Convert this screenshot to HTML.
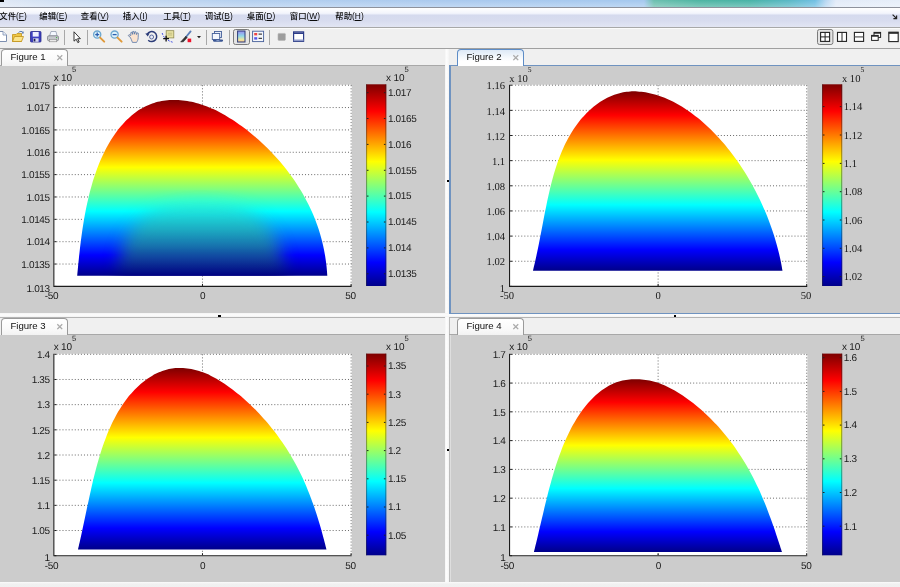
<!DOCTYPE html><html><head><meta charset="utf-8"><title>Figures</title><style>
html,body{margin:0;padding:0;background:#f0f0f0;}
#root{opacity:0.999;position:relative;width:900px;height:587px;overflow:hidden;background:#f0f0f0;font-family:"Liberation Sans","Noto Sans CJK SC",sans-serif;}
#root div,#root span{position:absolute;box-sizing:border-box;}
#title{left:0;top:0;width:900px;height:7px;background:linear-gradient(180deg,rgba(255,255,255,0) 0,rgba(255,255,255,0.28) 100%),linear-gradient(90deg,#dfe8f5 0px,#cfdff3 60px,#b3cfef 250px,#a9c9ee 450px,#a4c8ee 644px,#6bbfae 654px,#4db5a2 700px,#48b3a6 750px,#5ab8c6 790px,#6fbfe2 815px,#b8d8f2 826px,#e2ebf8 836px,#e6eef9 900px);}
#titleline{left:0;top:7px;width:900px;height:1px;background:#8e929c;}
#blk{left:0;top:0;width:4px;height:2px;background:#000;}
#menu{left:0;top:8px;width:900px;height:19px;background:linear-gradient(180deg,#ffffff 0px,#f3f5fc 5px,#eceffa 6px,#d5daee 7px,#d8dcef 13px,#e2e5f3 19px);}
#menu span{top:2.4px;margin-left:-0.7px;font-weight:500;font-size:8.4px;line-height:12px;color:#0a0a0a;white-space:nowrap;}
#menu u{text-decoration:underline;}
#tb{left:0;top:27px;width:900px;height:22px;background:#f0f0f0;border-top:1px solid #a8a8a8;border-bottom:1px solid #a0a0a0;box-shadow:inset 0 1px 0 #fbfbfb;}
.sep{top:30px;width:1px;height:15px;background:#a8a8a8;}
.tabstrip{height:18px;background:#f0f0f0;}
.tab{height:17px;background:linear-gradient(180deg,#fff,#fafafa 60%,#f2f2f2);border:1px solid #9a9a9a;border-bottom:none;border-radius:4px 4px 0 0;}
.tab span{left:8.4px;top:1px;font-size:9.6px;line-height:12px;color:#111;white-space:nowrap;}
.tab i{position:absolute;right:3px;top:2px;font-style:normal;font-size:9px;line-height:12px;color:#aaa;font-weight:bold;}
.pane{background:#cccccc;}
</style></head><body>
<div id="root">
<div id="title"></div><div id="blk"></div><div id="titleline"></div>
<div id="menu"><span style="left:0px">文件(<u>F</u>)</span><span style="left:40px">编辑(<u>E</u>)</span><span style="left:81.5px">查看(<u>V</u>)</span><span style="left:123.5px">插入(<u>I</u>)</span><span style="left:164px">工具(<u>T</u>)</span><span style="left:205.5px">调试(<u>B</u>)</span><span style="left:247.5px">桌面(<u>D</u>)</span><span style="left:290.5px">窗口(<u>W</u>)</span><span style="left:336px">帮助(<u>H</u>)</span></div>
<div id="tb"></div>
<div class="sep" style="left:64px"></div>
<div class="sep" style="left:87px"></div>
<div class="sep" style="left:206px"></div>
<div class="sep" style="left:229px"></div>
<div class="sep" style="left:269px"></div>
<div style="left:0;top:49px;width:900px;height:538px;background:#f0f0f0"></div>
<div style="left:445px;top:49px;width:4px;height:538px;background:linear-gradient(90deg,#f4f4f4,#fdfdfd 40%,#f4f4f4)"></div>
<div style="left:0;top:313px;width:900px;height:4px;background:linear-gradient(180deg,#f4f4f4,#fdfdfd 50%,#f2f2f2)"></div>
<div style="left:0;top:582px;width:900px;height:5px;background:linear-gradient(180deg,#fbfbfb,#f1f1f1 2px,#f0f0f0)"></div>
<div class="pane" style="left:0;top:66px;width:445px;height:247px"></div>
<div style="left:449px;top:65px;width:452px;height:249.2px;background:#6f93c0"></div>
<div class="pane" style="left:450.6px;top:66px;width:450px;height:247px"></div>
<div class="pane" style="left:0;top:335px;width:445px;height:247px"></div>
<div style="left:449px;top:318px;width:1px;height:264px;background:#bdbdbd"></div>
<div style="left:450px;top:335px;width:1px;height:247px;background:#dedede"></div>
<div class="pane" style="left:451px;top:335px;width:449px;height:247px"></div>
<div style="left:0;top:317px;width:445px;height:1px;background:#b4b4b4"></div>
<div style="left:449px;top:317px;width:451px;height:1px;background:#b4b4b4"></div>
<div style="left:446.7px;top:180px;width:2.3px;height:2.1px;background:#000"></div>
<div style="left:446.7px;top:449px;width:2.3px;height:2.1px;background:#000"></div>
<div style="left:218.3px;top:315px;width:2.5px;height:2px;background:#000"></div>
<div style="left:674px;top:315px;width:2.3px;height:2px;background:#000"></div>
<div class="tab" style="left:1px;top:49px;width:67px;"><span>Figure 1</span><i>✕</i></div>
<div class="tab" style="left:457px;top:49px;width:67px;border-color:#5d8cc6;background:linear-gradient(180deg,#dde9f6,#f4f8fc 45%,#ffffff 70%);"><span>Figure 2</span><i>✕</i></div>
<div class="tab" style="left:1px;top:318px;width:67px;"><span>Figure 3</span><i>✕</i></div>
<div class="tab" style="left:457px;top:318px;width:67px;"><span>Figure 4</span><i>✕</i></div>
<div style="left:68px;top:65px;width:377px;height:1px;background:#a8a8a8"></div>
<div style="left:0;top:65px;width:2px;height:1px;background:#a8a8a8"></div>
<div style="left:68px;top:334px;width:377px;height:1px;background:#a8a8a8"></div>
<div style="left:524px;top:334px;width:376px;height:1px;background:#a8a8a8"></div>
<div style="left:449px;top:334px;width:8px;height:1px;background:#a8a8a8"></div>
<svg width="900" height="587" viewBox="0 0 900 587" style="position:absolute;left:0;top:0">
<rect x="53.35" y="84.70" width="298.45" height="202.20" fill="#fff"/>
<linearGradient id="jet1" gradientUnits="userSpaceOnUse" x1="0" y1="275.70" x2="0" y2="100.00"><stop offset="0.0000" stop-color="rgb(0,0,138)"/><stop offset="0.1170" stop-color="rgb(0,0,255)"/><stop offset="0.3670" stop-color="rgb(0,255,255)"/><stop offset="0.6170" stop-color="rgb(255,255,0)"/><stop offset="0.8670" stop-color="rgb(255,0,0)"/><stop offset="1.0000" stop-color="rgb(125,0,0)"/></linearGradient>
<linearGradient id="jet1c" gradientUnits="userSpaceOnUse" x1="0" y1="286.00" x2="0" y2="84.30"><stop offset="0.0000" stop-color="rgb(0,0,138)"/><stop offset="0.1170" stop-color="rgb(0,0,255)"/><stop offset="0.3670" stop-color="rgb(0,255,255)"/><stop offset="0.6170" stop-color="rgb(255,255,0)"/><stop offset="0.8670" stop-color="rgb(255,0,0)"/><stop offset="1.0000" stop-color="rgb(125,0,0)"/></linearGradient>
<path d="M56.35,264.04H351.60M56.35,241.69H351.60M56.35,219.33H351.60M56.35,196.98H351.60M56.35,174.62H351.60M56.35,152.27H351.60M56.35,129.91H351.60M56.35,107.56H351.60M56.35,85.20H351.60M202.48,85.20V286.40M351.10,85.20V286.40" stroke="#6a6a6a" stroke-width="1" stroke-dasharray="1 2.07" fill="none"/>
<path d="M77.20,275.70C77.34,274.22 77.75,269.73 78.03,266.81C78.31,263.88 78.60,260.99 78.89,258.14C79.19,255.29 79.50,252.48 79.81,249.71C80.13,246.94 80.46,244.20 80.80,241.51C81.14,238.81 81.49,236.15 81.86,233.54C82.23,230.92 82.61,228.34 83.01,225.80C83.41,223.26 83.82,220.75 84.25,218.29C84.68,215.82 85.13,213.40 85.59,211.01C86.05,208.62 86.53,206.27 87.03,203.96C87.53,201.65 88.05,199.38 88.58,197.15C89.11,194.92 89.67,192.72 90.24,190.56C90.81,188.41 91.40,186.29 92.00,184.21C92.61,182.13 93.23,180.09 93.88,178.09C94.52,176.09 95.18,174.12 95.86,172.20C96.54,170.27 97.24,168.39 97.95,166.54C98.67,164.69 99.40,162.88 100.15,161.11C100.89,159.34 101.66,157.60 102.44,155.91C103.22,154.22 104.02,152.56 104.84,150.94C105.65,149.33 106.48,147.75 107.33,146.21C108.17,144.67 109.03,143.16 109.91,141.70C110.79,140.24 111.68,138.81 112.58,137.43C113.48,136.04 114.40,134.69 115.33,133.38C116.27,132.07 117.21,130.80 118.17,129.57C119.13,128.34 120.10,127.15 121.08,125.99C122.06,124.84 123.06,123.72 124.07,122.64C125.07,121.56 126.09,120.52 127.13,119.52C128.16,118.52 129.20,117.56 130.25,116.63C131.31,115.71 132.37,114.82 133.45,113.98C134.52,113.13 135.61,112.32 136.71,111.55C137.81,110.78 138.92,110.05 140.04,109.36C141.16,108.66 142.29,108.01 143.43,107.39C144.58,106.78 145.73,106.20 146.90,105.66C148.07,105.12 149.25,104.62 150.44,104.16C151.64,103.70 152.84,103.27 154.06,102.89C155.28,102.50 156.52,102.16 157.77,101.85C159.02,101.54 160.28,101.27 161.56,101.04C162.85,100.81 164.14,100.62 165.46,100.46C166.78,100.31 168.11,100.19 169.47,100.12C170.82,100.04 172.14,100.00 173.60,100.00C175.06,100.00 176.71,100.04 178.23,100.12C179.76,100.19 181.27,100.31 182.77,100.46C184.27,100.62 185.75,100.81 187.23,101.04C188.72,101.27 190.18,101.54 191.65,101.85C193.12,102.16 194.59,102.50 196.05,102.89C197.52,103.27 198.98,103.70 200.45,104.16C201.92,104.62 203.39,105.12 204.86,105.66C206.33,106.20 207.81,106.78 209.30,107.39C210.78,108.01 212.27,108.66 213.77,109.36C215.26,110.05 216.77,110.78 218.28,111.55C219.79,112.32 221.31,113.13 222.84,113.98C224.36,114.82 225.90,115.71 227.44,116.63C228.99,117.56 230.54,118.52 232.10,119.52C233.65,120.52 235.22,121.56 236.79,122.64C238.36,123.72 239.94,124.84 241.53,125.99C243.11,127.15 244.70,128.34 246.29,129.57C247.88,130.80 249.48,132.07 251.07,133.38C252.67,134.69 254.27,136.04 255.87,137.43C257.47,138.81 259.07,140.24 260.66,141.70C262.25,143.16 263.85,144.67 265.43,146.21C267.02,147.75 268.60,149.33 270.17,150.94C271.74,152.56 273.31,154.22 274.86,155.91C276.41,157.60 277.96,159.34 279.48,161.11C281.01,162.88 282.52,164.69 284.01,166.54C285.51,168.39 286.99,170.27 288.44,172.20C289.89,174.12 291.33,176.09 292.74,178.09C294.15,180.09 295.53,182.13 296.89,184.21C298.24,186.29 299.57,188.41 300.87,190.56C302.16,192.72 303.43,194.92 304.66,197.15C305.88,199.38 307.08,201.65 308.23,203.96C309.38,206.27 310.50,208.62 311.57,211.01C312.64,213.40 313.67,215.82 314.65,218.29C315.63,220.75 316.57,223.26 317.45,225.80C318.34,228.34 319.18,230.92 319.96,233.54C320.74,236.15 321.47,238.81 322.14,241.51C322.81,244.20 323.43,246.94 323.99,249.71C324.54,252.48 325.04,255.29 325.47,258.14C325.91,260.99 326.28,263.88 326.58,266.81C326.89,269.73 327.18,274.22 327.30,275.70Z" fill="url(#jet1)"/>
<clipPath id="c1"><path d="M77.20,275.70C77.34,274.22 77.75,269.73 78.03,266.81C78.31,263.88 78.60,260.99 78.89,258.14C79.19,255.29 79.50,252.48 79.81,249.71C80.13,246.94 80.46,244.20 80.80,241.51C81.14,238.81 81.49,236.15 81.86,233.54C82.23,230.92 82.61,228.34 83.01,225.80C83.41,223.26 83.82,220.75 84.25,218.29C84.68,215.82 85.13,213.40 85.59,211.01C86.05,208.62 86.53,206.27 87.03,203.96C87.53,201.65 88.05,199.38 88.58,197.15C89.11,194.92 89.67,192.72 90.24,190.56C90.81,188.41 91.40,186.29 92.00,184.21C92.61,182.13 93.23,180.09 93.88,178.09C94.52,176.09 95.18,174.12 95.86,172.20C96.54,170.27 97.24,168.39 97.95,166.54C98.67,164.69 99.40,162.88 100.15,161.11C100.89,159.34 101.66,157.60 102.44,155.91C103.22,154.22 104.02,152.56 104.84,150.94C105.65,149.33 106.48,147.75 107.33,146.21C108.17,144.67 109.03,143.16 109.91,141.70C110.79,140.24 111.68,138.81 112.58,137.43C113.48,136.04 114.40,134.69 115.33,133.38C116.27,132.07 117.21,130.80 118.17,129.57C119.13,128.34 120.10,127.15 121.08,125.99C122.06,124.84 123.06,123.72 124.07,122.64C125.07,121.56 126.09,120.52 127.13,119.52C128.16,118.52 129.20,117.56 130.25,116.63C131.31,115.71 132.37,114.82 133.45,113.98C134.52,113.13 135.61,112.32 136.71,111.55C137.81,110.78 138.92,110.05 140.04,109.36C141.16,108.66 142.29,108.01 143.43,107.39C144.58,106.78 145.73,106.20 146.90,105.66C148.07,105.12 149.25,104.62 150.44,104.16C151.64,103.70 152.84,103.27 154.06,102.89C155.28,102.50 156.52,102.16 157.77,101.85C159.02,101.54 160.28,101.27 161.56,101.04C162.85,100.81 164.14,100.62 165.46,100.46C166.78,100.31 168.11,100.19 169.47,100.12C170.82,100.04 172.14,100.00 173.60,100.00C175.06,100.00 176.71,100.04 178.23,100.12C179.76,100.19 181.27,100.31 182.77,100.46C184.27,100.62 185.75,100.81 187.23,101.04C188.72,101.27 190.18,101.54 191.65,101.85C193.12,102.16 194.59,102.50 196.05,102.89C197.52,103.27 198.98,103.70 200.45,104.16C201.92,104.62 203.39,105.12 204.86,105.66C206.33,106.20 207.81,106.78 209.30,107.39C210.78,108.01 212.27,108.66 213.77,109.36C215.26,110.05 216.77,110.78 218.28,111.55C219.79,112.32 221.31,113.13 222.84,113.98C224.36,114.82 225.90,115.71 227.44,116.63C228.99,117.56 230.54,118.52 232.10,119.52C233.65,120.52 235.22,121.56 236.79,122.64C238.36,123.72 239.94,124.84 241.53,125.99C243.11,127.15 244.70,128.34 246.29,129.57C247.88,130.80 249.48,132.07 251.07,133.38C252.67,134.69 254.27,136.04 255.87,137.43C257.47,138.81 259.07,140.24 260.66,141.70C262.25,143.16 263.85,144.67 265.43,146.21C267.02,147.75 268.60,149.33 270.17,150.94C271.74,152.56 273.31,154.22 274.86,155.91C276.41,157.60 277.96,159.34 279.48,161.11C281.01,162.88 282.52,164.69 284.01,166.54C285.51,168.39 286.99,170.27 288.44,172.20C289.89,174.12 291.33,176.09 292.74,178.09C294.15,180.09 295.53,182.13 296.89,184.21C298.24,186.29 299.57,188.41 300.87,190.56C302.16,192.72 303.43,194.92 304.66,197.15C305.88,199.38 307.08,201.65 308.23,203.96C309.38,206.27 310.50,208.62 311.57,211.01C312.64,213.40 313.67,215.82 314.65,218.29C315.63,220.75 316.57,223.26 317.45,225.80C318.34,228.34 319.18,230.92 319.96,233.54C320.74,236.15 321.47,238.81 322.14,241.51C322.81,244.20 323.43,246.94 323.99,249.71C324.54,252.48 325.04,255.29 325.47,258.14C325.91,260.99 326.28,263.88 326.58,266.81C326.89,269.73 327.18,274.22 327.30,275.70Z"/></clipPath><filter id="bl" x="-30%" y="-30%" width="160%" height="160%"><feGaussianBlur stdDeviation="8"/></filter><linearGradient id="shg" gradientUnits="userSpaceOnUse" x1="0" y1="200" x2="0" y2="276"><stop offset="0" stop-color="rgb(50,250,210)"/><stop offset="0.2" stop-color="rgb(30,215,215)"/><stop offset="0.4" stop-color="rgb(30,170,190)"/><stop offset="0.6" stop-color="rgb(25,120,170)"/><stop offset="0.8" stop-color="rgb(15,60,150)"/><stop offset="1" stop-color="rgb(0,0,128)"/></linearGradient><mask id="shm" maskUnits="userSpaceOnUse" x="60" y="150" width="290" height="150"><path d="M114,300 C116,228 142,200 201,200 C260,200 286,228 288,300 Z" fill="#fff" filter="url(#bl)"/></mask><g clip-path="url(#c1)"><rect x="70" y="190" width="270" height="90" fill="url(#shg)" mask="url(#shm)" opacity="0.95"/></g>
<path d="M53.85,84.70V286.40H351.70" stroke="#1c1c1c" stroke-width="1.1" fill="none"/>
<path d="M54.35,286.40h2M54.35,264.04h2M54.35,241.69h2M54.35,219.33h2M54.35,196.98h2M54.35,174.62h2M54.35,152.27h2M54.35,129.91h2M54.35,107.56h2M54.35,85.20h2M202.48,285.90v-2M351.10,285.90v-2" stroke="#1c1c1c" stroke-width="1" fill="none"/>
<g style="font-family:'Liberation Sans', sans-serif;font-size:10px;letter-spacing:-0.35px;text-rendering:geometricPrecision" fill="#1a1a1a">
<text x="49.80" y="291.80" text-anchor="end">1.013</text>
<text x="49.80" y="267.84" text-anchor="end">1.0135</text>
<text x="49.80" y="245.49" text-anchor="end">1.014</text>
<text x="49.80" y="223.13" text-anchor="end">1.0145</text>
<text x="49.80" y="200.78" text-anchor="end">1.015</text>
<text x="49.80" y="178.42" text-anchor="end">1.0155</text>
<text x="49.80" y="156.07" text-anchor="end">1.016</text>
<text x="49.80" y="133.71" text-anchor="end">1.0165</text>
<text x="49.80" y="111.36" text-anchor="end">1.017</text>
<text x="49.80" y="89.00" text-anchor="end">1.0175</text>
<text x="51.52" y="299.30" text-anchor="middle">-50</text>
<text x="202.65" y="299.30" text-anchor="middle">0</text>
<text x="350.58" y="299.30" text-anchor="middle">50</text>
<text x="53.65" y="80.60" style="letter-spacing:-0.15px">x 10</text>
<text x="72.05" y="71.60" style="font-size:7.6px">5</text>
<rect x="366.10" y="84.30" width="20.20" height="201.70" fill="url(#jet1c)"/>
<path d="M366.60,84.30V286.00M385.80,84.30V286.00" stroke="#222" stroke-width="1" fill="none" opacity="0.45"/>
<text x="387.90" y="277.10">1.0135</text>
<text x="387.90" y="251.20">1.014</text>
<text x="387.90" y="225.30">1.0145</text>
<text x="387.90" y="199.40">1.015</text>
<text x="387.90" y="173.60">1.0155</text>
<text x="387.90" y="147.70">1.016</text>
<text x="387.90" y="121.80">1.0165</text>
<text x="387.90" y="96.00">1.017</text>
<path d="M366.90,273.80h1.6M385.50,273.80h-1.6M366.90,247.90h1.6M385.50,247.90h-1.6M366.90,222.00h1.6M385.50,222.00h-1.6M366.90,196.10h1.6M385.50,196.10h-1.6M366.90,170.30h1.6M385.50,170.30h-1.6M366.90,144.40h1.6M385.50,144.40h-1.6M366.90,118.50h1.6M385.50,118.50h-1.6M366.90,92.70h1.6M385.50,92.70h-1.6" stroke="#222" stroke-width="1" fill="none"/>
<text x="386.00" y="81.00" style="letter-spacing:-0.15px">x 10</text>
<text x="404.50" y="71.70" style="font-size:7.6px">5</text>
</g>
<rect x="509.05" y="84.70" width="298.35" height="202.20" fill="#fff"/>
<linearGradient id="jet2" gradientUnits="userSpaceOnUse" x1="0" y1="270.70" x2="0" y2="91.30"><stop offset="0.0000" stop-color="rgb(0,0,138)"/><stop offset="0.1170" stop-color="rgb(0,0,255)"/><stop offset="0.3670" stop-color="rgb(0,255,255)"/><stop offset="0.6170" stop-color="rgb(255,255,0)"/><stop offset="0.8670" stop-color="rgb(255,0,0)"/><stop offset="1.0000" stop-color="rgb(125,0,0)"/></linearGradient>
<linearGradient id="jet2c" gradientUnits="userSpaceOnUse" x1="0" y1="286.00" x2="0" y2="84.30"><stop offset="0.0000" stop-color="rgb(0,0,138)"/><stop offset="0.1170" stop-color="rgb(0,0,255)"/><stop offset="0.3670" stop-color="rgb(0,255,255)"/><stop offset="0.6170" stop-color="rgb(255,255,0)"/><stop offset="0.8670" stop-color="rgb(255,0,0)"/><stop offset="1.0000" stop-color="rgb(125,0,0)"/></linearGradient>
<path d="M512.05,261.25H807.20M512.05,236.10H807.20M512.05,210.95H807.20M512.05,185.80H807.20M512.05,160.65H807.20M512.05,135.50H807.20M512.05,110.35H807.20M512.05,85.20H807.20M658.12,85.20V286.40M806.70,85.20V286.40" stroke="#6a6a6a" stroke-width="1" stroke-dasharray="1 2.07" fill="none"/>
<path d="M533.00,270.70C533.35,269.19 534.45,264.61 535.12,261.62C535.79,258.63 536.42,255.68 537.03,252.77C537.65,249.86 538.23,246.99 538.79,244.16C539.36,241.33 539.90,238.54 540.43,235.79C540.97,233.04 541.48,230.32 541.99,227.65C542.51,224.98 543.00,222.34 543.50,219.75C544.01,217.15 544.50,214.60 545.00,212.08C545.49,209.56 545.99,207.09 546.49,204.65C547.00,202.21 547.50,199.81 548.02,197.45C548.54,195.09 549.06,192.78 549.60,190.49C550.14,188.21 550.68,185.97 551.24,183.77C551.80,181.57 552.38,179.41 552.97,177.28C553.56,175.16 554.16,173.08 554.79,171.03C555.41,168.99 556.05,166.98 556.71,165.02C557.36,163.05 558.04,161.13 558.74,159.24C559.43,157.35 560.15,155.50 560.88,153.69C561.61,151.89 562.37,150.12 563.14,148.39C563.92,146.66 564.71,144.97 565.52,143.32C566.34,141.66 567.17,140.05 568.02,138.48C568.88,136.91 569.75,135.37 570.64,133.88C571.53,132.39 572.44,130.93 573.37,129.52C574.30,128.10 575.25,126.72 576.21,125.39C577.18,124.05 578.16,122.75 579.16,121.49C580.15,120.24 581.17,119.02 582.20,117.84C583.22,116.66 584.27,115.52 585.32,114.42C586.38,113.32 587.45,112.26 588.53,111.23C589.62,110.21 590.71,109.23 591.82,108.28C592.92,107.34 594.04,106.44 595.16,105.57C596.29,104.71 597.42,103.88 598.56,103.09C599.70,102.31 600.85,101.56 602.01,100.85C603.16,100.15 604.32,99.48 605.49,98.85C606.65,98.22 607.82,97.63 608.99,97.08C610.16,96.53 611.34,96.02 612.52,95.55C613.69,95.07 614.87,94.64 616.05,94.25C617.22,93.86 618.40,93.50 619.58,93.19C620.76,92.87 621.93,92.60 623.11,92.36C624.28,92.13 625.45,91.93 626.62,91.77C627.79,91.61 628.96,91.50 630.12,91.42C631.28,91.34 632.38,91.30 633.60,91.30C634.82,91.30 636.15,91.34 637.46,91.42C638.76,91.50 640.08,91.61 641.42,91.77C642.76,91.93 644.11,92.13 645.48,92.36C646.85,92.60 648.23,92.87 649.62,93.19C651.02,93.50 652.42,93.86 653.83,94.25C655.25,94.64 656.67,95.07 658.10,95.55C659.53,96.02 660.97,96.53 662.42,97.08C663.86,97.63 665.31,98.22 666.77,98.85C668.23,99.48 669.69,100.15 671.15,100.85C672.62,101.56 674.08,102.31 675.55,103.09C677.02,103.88 678.50,104.71 679.97,105.57C681.45,106.44 682.92,107.34 684.40,108.28C685.87,109.23 687.35,110.21 688.82,111.23C690.30,112.26 691.77,113.32 693.24,114.42C694.72,115.52 696.19,116.66 697.65,117.84C699.12,119.02 700.59,120.24 702.05,121.49C703.51,122.75 704.97,124.05 706.43,125.39C707.88,126.72 709.33,128.10 710.78,129.52C712.22,130.93 713.66,132.39 715.10,133.88C716.53,135.37 717.96,136.91 719.38,138.48C720.81,140.05 722.22,141.66 723.63,143.32C725.03,144.97 726.43,146.66 727.82,148.39C729.21,150.12 730.59,151.89 731.96,153.69C733.34,155.50 734.70,157.35 736.05,159.24C737.40,161.13 738.73,163.05 740.06,165.02C741.38,166.98 742.70,168.99 744.00,171.03C745.29,173.08 746.58,175.16 747.85,177.28C749.11,179.41 750.37,181.57 751.60,183.77C752.83,185.97 754.05,188.21 755.25,190.49C756.44,192.78 757.62,195.09 758.78,197.45C759.93,199.81 761.06,202.21 762.17,204.65C763.28,207.09 764.36,209.56 765.42,212.08C766.48,214.60 767.51,217.15 768.50,219.75C769.50,222.34 770.47,224.98 771.41,227.65C772.34,230.32 773.25,233.04 774.11,235.79C774.98,238.54 775.81,241.33 776.60,244.16C777.39,246.99 778.14,249.86 778.84,252.77C779.54,255.68 780.20,258.63 780.81,261.62C781.42,264.61 782.21,269.19 782.49,270.70Z" fill="url(#jet2)"/>
<path d="M509.55,84.70V286.40H807.30" stroke="#1c1c1c" stroke-width="1.1" fill="none"/>
<path d="M510.05,286.40h2M510.05,261.25h2M510.05,236.10h2M510.05,210.95h2M510.05,185.80h2M510.05,160.65h2M510.05,135.50h2M510.05,110.35h2M510.05,85.20h2M658.12,285.90v-2M806.70,285.90v-2" stroke="#1c1c1c" stroke-width="1" fill="none"/>
<g style="font-family:'Liberation Serif', serif;font-size:10.6px;letter-spacing:0px;text-rendering:geometricPrecision" fill="#1a1a1a">
<text x="505.15" y="292.20" text-anchor="end">1</text>
<text x="505.15" y="265.45" text-anchor="end">1.02</text>
<text x="505.15" y="240.30" text-anchor="end">1.04</text>
<text x="505.15" y="215.15" text-anchor="end">1.06</text>
<text x="505.15" y="190.00" text-anchor="end">1.08</text>
<text x="505.15" y="164.85" text-anchor="end">1.1</text>
<text x="505.15" y="139.70" text-anchor="end">1.12</text>
<text x="505.15" y="114.55" text-anchor="end">1.14</text>
<text x="505.15" y="89.40" text-anchor="end">1.16</text>
<text x="507.05" y="299.30" text-anchor="middle">-50</text>
<text x="658.12" y="299.30" text-anchor="middle">0</text>
<text x="806.00" y="299.30" text-anchor="middle">50</text>
<text x="509.35" y="81.70" style="letter-spacing:0px">x 10</text>
<text x="527.75" y="71.60" style="font-size:7.6px">5</text>
<rect x="822.10" y="84.30" width="20.10" height="201.70" fill="url(#jet2c)"/>
<path d="M822.60,84.30V286.00M841.70,84.30V286.00" stroke="#222" stroke-width="1" fill="none" opacity="0.45"/>
<text x="843.80" y="280.30">1.02</text>
<text x="843.80" y="252.00">1.04</text>
<text x="843.80" y="223.70">1.06</text>
<text x="843.80" y="195.40">1.08</text>
<text x="843.80" y="167.10">1.1</text>
<text x="843.80" y="138.70">1.12</text>
<text x="843.80" y="110.30">1.14</text>
<path d="M822.90,276.60h1.6M841.40,276.60h-1.6M822.90,248.30h1.6M841.40,248.30h-1.6M822.90,220.00h1.6M841.40,220.00h-1.6M822.90,191.70h1.6M841.40,191.70h-1.6M822.90,163.40h1.6M841.40,163.40h-1.6M822.90,135.00h1.6M841.40,135.00h-1.6M822.90,106.60h1.6M841.40,106.60h-1.6" stroke="#222" stroke-width="1" fill="none"/>
<text x="841.90" y="82.10" style="letter-spacing:0px">x 10</text>
<text x="860.40" y="71.70" style="font-size:7.6px">5</text>
</g>
<rect x="53.35" y="353.80" width="298.45" height="202.40" fill="#fff"/>
<linearGradient id="jet3" gradientUnits="userSpaceOnUse" x1="0" y1="549.40" x2="0" y2="368.00"><stop offset="0.0000" stop-color="rgb(0,0,138)"/><stop offset="0.1170" stop-color="rgb(0,0,255)"/><stop offset="0.3670" stop-color="rgb(0,255,255)"/><stop offset="0.6170" stop-color="rgb(255,255,0)"/><stop offset="0.8670" stop-color="rgb(255,0,0)"/><stop offset="1.0000" stop-color="rgb(125,0,0)"/></linearGradient>
<linearGradient id="jet3c" gradientUnits="userSpaceOnUse" x1="0" y1="555.30" x2="0" y2="353.60"><stop offset="0.0000" stop-color="rgb(0,0,138)"/><stop offset="0.1170" stop-color="rgb(0,0,255)"/><stop offset="0.3670" stop-color="rgb(0,255,255)"/><stop offset="0.6170" stop-color="rgb(255,255,0)"/><stop offset="0.8670" stop-color="rgb(255,0,0)"/><stop offset="1.0000" stop-color="rgb(125,0,0)"/></linearGradient>
<path d="M56.35,530.53H351.60M56.35,505.35H351.60M56.35,480.18H351.60M56.35,455.00H351.60M56.35,429.83H351.60M56.35,404.65H351.60M56.35,379.48H351.60M56.35,354.30H351.60M202.48,354.30V555.70M351.10,354.30V555.70" stroke="#6a6a6a" stroke-width="1" stroke-dasharray="1 2.07" fill="none"/>
<path d="M78.00,549.40C78.35,547.87 79.43,543.24 80.10,540.22C80.78,537.20 81.43,534.21 82.07,531.27C82.71,528.33 83.32,525.43 83.93,522.57C84.54,519.70 85.13,516.88 85.72,514.10C86.30,511.32 86.88,508.57 87.46,505.87C88.03,503.17 88.60,500.50 89.17,497.88C89.74,495.25 90.31,492.67 90.88,490.13C91.45,487.58 92.02,485.08 92.60,482.61C93.18,480.15 93.77,477.72 94.36,475.34C94.96,472.95 95.55,470.61 96.17,468.30C96.78,465.99 97.40,463.73 98.03,461.50C98.66,459.28 99.30,457.09 99.96,454.94C100.62,452.80 101.29,450.69 101.97,448.62C102.65,446.55 103.35,444.53 104.06,442.54C104.78,440.55 105.50,438.60 106.25,436.70C106.99,434.79 107.75,432.92 108.52,431.09C109.30,429.26 110.09,427.47 110.89,425.72C111.70,423.97 112.52,422.26 113.36,420.60C114.19,418.93 115.05,417.30 115.91,415.71C116.78,414.12 117.67,412.56 118.56,411.05C119.46,409.54 120.38,408.07 121.30,406.64C122.23,405.21 123.17,403.82 124.13,402.47C125.08,401.12 126.05,399.80 127.03,398.53C128.01,397.26 129.00,396.03 130.01,394.83C131.01,393.64 132.03,392.49 133.06,391.38C134.08,390.26 135.12,389.19 136.16,388.16C137.21,387.12 138.26,386.13 139.32,385.17C140.39,384.22 141.46,383.31 142.53,382.43C143.61,381.56 144.69,380.72 145.78,379.93C146.86,379.13 147.96,378.38 149.05,377.66C150.15,376.94 151.25,376.27 152.35,375.63C153.45,375.00 154.56,374.40 155.66,373.84C156.77,373.29 157.87,372.77 158.98,372.29C160.08,371.82 161.19,371.38 162.29,370.98C163.40,370.58 164.50,370.23 165.60,369.91C166.70,369.59 167.80,369.31 168.89,369.07C169.98,368.83 171.07,368.64 172.16,368.48C173.24,368.32 174.32,368.20 175.39,368.12C176.47,368.04 177.33,368.00 178.60,368.00C179.87,368.00 181.60,368.04 183.04,368.12C184.48,368.20 185.88,368.32 187.26,368.48C188.64,368.64 189.98,368.83 191.31,369.07C192.64,369.31 193.95,369.59 195.25,369.91C196.56,370.23 197.84,370.58 199.13,370.98C200.41,371.38 201.68,371.82 202.96,372.29C204.24,372.77 205.51,373.29 206.80,373.84C208.08,374.40 209.36,375.00 210.65,375.63C211.94,376.27 213.24,376.94 214.54,377.66C215.85,378.38 217.16,379.13 218.49,379.93C219.81,380.72 221.15,381.56 222.50,382.43C223.84,383.31 225.20,384.22 226.57,385.17C227.94,386.13 229.32,387.12 230.72,388.16C232.11,389.19 233.51,390.26 234.93,391.38C236.34,392.49 237.77,393.64 239.20,394.83C240.63,396.03 242.07,397.26 243.52,398.53C244.97,399.80 246.42,401.12 247.88,402.47C249.34,403.82 250.81,405.21 252.27,406.64C253.74,408.07 255.21,409.54 256.68,411.05C258.14,412.56 259.61,414.12 261.08,415.71C262.54,417.30 264.01,418.93 265.46,420.60C266.92,422.26 268.37,423.97 269.81,425.72C271.25,427.47 272.68,429.26 274.10,431.09C275.52,432.92 276.93,434.79 278.32,436.70C279.72,438.60 281.10,440.55 282.46,442.54C283.82,444.53 285.16,446.55 286.49,448.62C287.81,450.69 289.12,452.80 290.40,454.94C291.69,457.09 292.95,459.28 294.19,461.50C295.42,463.73 296.64,465.99 297.83,468.30C299.02,470.61 300.19,472.95 301.33,475.34C302.47,477.72 303.58,480.15 304.67,482.61C305.76,485.08 306.82,487.58 307.85,490.13C308.89,492.67 309.90,495.25 310.89,497.88C311.87,500.50 312.83,503.17 313.77,505.87C314.71,508.57 315.62,511.32 316.52,514.10C317.41,516.88 318.28,519.70 319.14,522.57C320.00,525.43 320.83,528.33 321.66,531.27C322.49,534.21 323.30,537.20 324.10,540.22C324.91,543.24 326.10,547.87 326.50,549.40Z" fill="url(#jet3)"/>
<path d="M53.85,353.80V555.70H351.70" stroke="#1c1c1c" stroke-width="1.1" fill="none"/>
<path d="M54.35,555.70h2M54.35,530.53h2M54.35,505.35h2M54.35,480.18h2M54.35,455.00h2M54.35,429.83h2M54.35,404.65h2M54.35,379.48h2M54.35,354.30h2M202.48,555.20v-2M351.10,555.20v-2" stroke="#1c1c1c" stroke-width="1" fill="none"/>
<g style="font-family:'Liberation Sans', sans-serif;font-size:10px;letter-spacing:-0.35px;text-rendering:geometricPrecision" fill="#1a1a1a">
<text x="49.80" y="561.10" text-anchor="end">1</text>
<text x="49.80" y="534.33" text-anchor="end">1.05</text>
<text x="49.80" y="509.15" text-anchor="end">1.1</text>
<text x="49.80" y="483.98" text-anchor="end">1.15</text>
<text x="49.80" y="458.80" text-anchor="end">1.2</text>
<text x="49.80" y="433.63" text-anchor="end">1.25</text>
<text x="49.80" y="408.45" text-anchor="end">1.3</text>
<text x="49.80" y="383.28" text-anchor="end">1.35</text>
<text x="49.80" y="358.10" text-anchor="end">1.4</text>
<text x="51.52" y="568.60" text-anchor="middle">-50</text>
<text x="202.65" y="568.60" text-anchor="middle">0</text>
<text x="350.58" y="568.60" text-anchor="middle">50</text>
<text x="53.65" y="349.70" style="letter-spacing:-0.15px">x 10</text>
<text x="72.05" y="340.70" style="font-size:7.6px">5</text>
<rect x="366.10" y="353.60" width="20.20" height="201.70" fill="url(#jet3c)"/>
<path d="M366.60,353.60V555.30M385.80,353.60V555.30" stroke="#222" stroke-width="1" fill="none" opacity="0.45"/>
<text x="387.90" y="538.50">1.05</text>
<text x="387.90" y="510.30">1.1</text>
<text x="387.90" y="482.10">1.15</text>
<text x="387.90" y="453.90">1.2</text>
<text x="387.90" y="425.70">1.25</text>
<text x="387.90" y="397.50">1.3</text>
<text x="387.90" y="369.30">1.35</text>
<path d="M366.90,535.20h1.6M385.50,535.20h-1.6M366.90,507.00h1.6M385.50,507.00h-1.6M366.90,478.80h1.6M385.50,478.80h-1.6M366.90,450.60h1.6M385.50,450.60h-1.6M366.90,422.40h1.6M385.50,422.40h-1.6M366.90,394.20h1.6M385.50,394.20h-1.6M366.90,366.00h1.6M385.50,366.00h-1.6" stroke="#222" stroke-width="1" fill="none"/>
<text x="386.00" y="350.30" style="letter-spacing:-0.15px">x 10</text>
<text x="404.50" y="341.00" style="font-size:7.6px">5</text>
</g>
<rect x="509.05" y="353.80" width="298.35" height="202.40" fill="#fff"/>
<linearGradient id="jet4" gradientUnits="userSpaceOnUse" x1="0" y1="551.90" x2="0" y2="379.20"><stop offset="0.0000" stop-color="rgb(0,0,138)"/><stop offset="0.1170" stop-color="rgb(0,0,255)"/><stop offset="0.3670" stop-color="rgb(0,255,255)"/><stop offset="0.6170" stop-color="rgb(255,255,0)"/><stop offset="0.8670" stop-color="rgb(255,0,0)"/><stop offset="1.0000" stop-color="rgb(125,0,0)"/></linearGradient>
<linearGradient id="jet4c" gradientUnits="userSpaceOnUse" x1="0" y1="555.30" x2="0" y2="353.60"><stop offset="0.0000" stop-color="rgb(0,0,138)"/><stop offset="0.1170" stop-color="rgb(0,0,255)"/><stop offset="0.3670" stop-color="rgb(0,255,255)"/><stop offset="0.6170" stop-color="rgb(255,255,0)"/><stop offset="0.8670" stop-color="rgb(255,0,0)"/><stop offset="1.0000" stop-color="rgb(125,0,0)"/></linearGradient>
<path d="M512.05,526.93H807.20M512.05,498.16H807.20M512.05,469.39H807.20M512.05,440.61H807.20M512.05,411.84H807.20M512.05,383.07H807.20M512.05,354.30H807.20M658.12,354.30V555.70M806.70,354.30V555.70" stroke="#6a6a6a" stroke-width="1" stroke-dasharray="1 2.07" fill="none"/>
<path d="M533.90,551.90C534.26,550.44 535.37,546.03 536.07,543.16C536.77,540.28 537.45,537.44 538.11,534.64C538.78,531.84 539.43,529.08 540.07,526.35C540.70,523.63 541.33,520.94 541.95,518.29C542.57,515.64 543.19,513.03 543.80,510.46C544.41,507.88 545.02,505.35 545.63,502.85C546.24,500.35 546.84,497.89 547.45,495.47C548.07,493.05 548.68,490.66 549.30,488.32C549.92,485.97 550.54,483.66 551.17,481.39C551.81,479.12 552.44,476.89 553.09,474.69C553.74,472.50 554.39,470.34 555.06,468.22C555.72,466.10 556.40,464.02 557.08,461.97C557.77,459.93 558.47,457.92 559.17,455.96C559.88,453.99 560.60,452.06 561.33,450.16C562.06,448.27 562.80,446.42 563.56,444.60C564.31,442.78 565.08,441.01 565.85,439.26C566.63,437.52 567.42,435.82 568.22,434.16C569.03,432.49 569.84,430.86 570.66,429.27C571.49,427.68 572.32,426.13 573.17,424.62C574.02,423.10 574.87,421.63 575.74,420.19C576.61,418.75 577.49,417.35 578.38,415.99C579.27,414.63 580.17,413.30 581.08,412.01C581.98,410.73 582.90,409.48 583.83,408.27C584.75,407.06 585.69,405.88 586.63,404.75C587.58,403.61 588.53,402.51 589.49,401.45C590.45,400.39 591.42,399.37 592.40,398.39C593.37,397.40 594.36,396.46 595.35,395.55C596.34,394.64 597.34,393.77 598.35,392.94C599.36,392.11 600.37,391.31 601.39,390.55C602.42,389.80 603.44,389.08 604.48,388.40C605.52,387.72 606.57,387.07 607.62,386.47C608.68,385.86 609.74,385.29 610.81,384.76C611.88,384.23 612.97,383.74 614.06,383.29C615.15,382.83 616.26,382.42 617.37,382.04C618.49,381.66 619.62,381.32 620.76,381.02C621.90,380.71 623.06,380.45 624.23,380.22C625.40,379.99 626.59,379.81 627.80,379.65C629.01,379.50 630.23,379.39 631.48,379.31C632.73,379.24 633.96,379.20 635.30,379.20C636.64,379.20 638.15,379.24 639.54,379.31C640.93,379.39 642.28,379.50 643.63,379.65C644.97,379.81 646.28,379.99 647.60,380.22C648.91,380.45 650.20,380.71 651.49,381.02C652.78,381.32 654.06,381.66 655.34,382.04C656.62,382.42 657.89,382.83 659.17,383.29C660.45,383.74 661.72,384.23 663.01,384.76C664.29,385.29 665.58,385.86 666.87,386.47C668.16,387.07 669.46,387.72 670.77,388.40C672.07,389.08 673.39,389.80 674.71,390.55C676.03,391.31 677.36,392.11 678.70,392.94C680.04,393.77 681.39,394.64 682.75,395.55C684.10,396.46 685.47,397.40 686.84,398.39C688.22,399.37 689.60,400.39 690.99,401.45C692.37,402.51 693.77,403.61 695.17,404.75C696.57,405.88 697.98,407.06 699.39,408.27C700.79,409.48 702.21,410.73 703.62,412.01C705.04,413.30 706.46,414.63 707.87,415.99C709.29,417.35 710.71,418.75 712.12,420.19C713.53,421.63 714.94,423.10 716.35,424.62C717.76,426.13 719.16,427.68 720.55,429.27C721.95,430.86 723.33,432.49 724.71,434.16C726.09,435.82 727.46,437.52 728.81,439.26C730.17,441.01 731.52,442.78 732.85,444.60C734.18,446.42 735.50,448.27 736.80,450.16C738.10,452.06 739.39,453.99 740.66,455.96C741.93,457.92 743.19,459.93 744.42,461.97C745.66,464.02 746.88,466.10 748.08,468.22C749.27,470.34 750.45,472.50 751.62,474.69C752.78,476.89 753.92,479.12 755.04,481.39C756.16,483.66 757.26,485.97 758.35,488.32C759.43,490.66 760.50,493.05 761.55,495.47C762.60,497.89 763.63,500.35 764.64,502.85C765.66,505.35 766.66,507.88 767.65,510.46C768.63,513.03 769.61,515.64 770.57,518.29C771.54,520.94 772.49,523.63 773.44,526.35C774.40,529.08 775.34,531.84 776.28,534.64C777.23,537.44 778.17,540.28 779.12,543.16C780.08,546.03 781.52,550.44 782.00,551.90Z" fill="url(#jet4)"/>
<path d="M509.55,353.80V555.70H807.30" stroke="#1c1c1c" stroke-width="1.1" fill="none"/>
<path d="M510.05,555.70h2M510.05,526.93h2M510.05,498.16h2M510.05,469.39h2M510.05,440.61h2M510.05,411.84h2M510.05,383.07h2M510.05,354.30h2M658.12,555.20v-2M806.70,555.20v-2" stroke="#1c1c1c" stroke-width="1" fill="none"/>
<g style="font-family:'Liberation Sans', sans-serif;font-size:10px;letter-spacing:-0.35px;text-rendering:geometricPrecision" fill="#1a1a1a">
<text x="505.50" y="561.10" text-anchor="end">1</text>
<text x="505.50" y="530.73" text-anchor="end">1.1</text>
<text x="505.50" y="501.96" text-anchor="end">1.2</text>
<text x="505.50" y="473.19" text-anchor="end">1.3</text>
<text x="505.50" y="444.41" text-anchor="end">1.4</text>
<text x="505.50" y="415.64" text-anchor="end">1.5</text>
<text x="505.50" y="386.87" text-anchor="end">1.6</text>
<text x="505.50" y="358.10" text-anchor="end">1.7</text>
<text x="507.23" y="568.60" text-anchor="middle">-50</text>
<text x="658.30" y="568.60" text-anchor="middle">0</text>
<text x="806.17" y="568.60" text-anchor="middle">50</text>
<text x="509.35" y="349.70" style="letter-spacing:-0.15px">x 10</text>
<text x="527.75" y="340.70" style="font-size:7.6px">5</text>
<rect x="822.10" y="353.60" width="20.10" height="201.70" fill="url(#jet4c)"/>
<path d="M822.60,353.60V555.30M841.70,353.60V555.30" stroke="#222" stroke-width="1" fill="none" opacity="0.45"/>
<text x="843.80" y="529.50">1.1</text>
<text x="843.80" y="495.80">1.2</text>
<text x="843.80" y="462.10">1.3</text>
<text x="843.80" y="428.40">1.4</text>
<text x="843.80" y="394.70">1.5</text>
<text x="843.80" y="361.00">1.6</text>
<path d="M822.90,526.20h1.6M841.40,526.20h-1.6M822.90,492.50h1.6M841.40,492.50h-1.6M822.90,458.80h1.6M841.40,458.80h-1.6M822.90,425.10h1.6M841.40,425.10h-1.6M822.90,391.40h1.6M841.40,391.40h-1.6M822.90,357.70h1.6M841.40,357.70h-1.6" stroke="#222" stroke-width="1" fill="none"/>
<text x="841.90" y="350.30" style="letter-spacing:-0.15px">x 10</text>
<text x="860.40" y="341.00" style="font-size:7.6px">5</text>
</g>
<path d="M-3,31.5H3L6.5,35V41.5H-3Z" fill="#fff" stroke="#7d8fb0" stroke-width="1"/><path d="M3,31.5V35H6.5" fill="#e8eefa" stroke="#7d8fb0" stroke-width="0.8"/>
<path d="M12.5,34.5H16L17,33.5H21.5V41.5H12.5Z" fill="#efc540" stroke="#c0921c" stroke-width="0.8"/><path d="M12.5,41.5L14.5,36.5H23.5L21.5,41.5Z" fill="#fbe48a" stroke="#c0921c" stroke-width="0.8"/><path d="M18.5,32.5C20,31 22,31 23,32.5" fill="none" stroke="#4a6ea8" stroke-width="0.9"/><path d="M23.6,31.2V33.4H21.4Z" fill="#4a6ea8"/>
<rect x="30.5" y="31.5" width="10.5" height="10.5" rx="0.8" fill="#3d3fc0" stroke="#2a2b8c" stroke-width="0.8"/><rect x="32.7" y="32" width="6" height="4.6" fill="#eef0ff"/><rect x="33" y="38.3" width="5.6" height="3.5" fill="#d8daf0"/><rect x="33.6" y="38.8" width="1.8" height="2.6" fill="#1c1c50"/>
<path d="M49.5,36L51,31.5H56L57,36Z" fill="#f4f8ff" stroke="#8a93a8" stroke-width="0.7"/><rect x="47.5" y="35.8" width="11" height="5" rx="1.4" fill="#c4c7cc" stroke="#7d8087" stroke-width="0.8"/><rect x="49.3" y="39.4" width="7.4" height="2.4" fill="#e9e9e9" stroke="#8a8a8a" stroke-width="0.6"/><circle cx="56.6" cy="37.6" r="0.7" fill="#3fae3f"/>
<path d="M74,31.8V41.2L76.2,39.2L77.8,42.6L79.2,42L77.6,38.7H80.4Z" fill="#fff" stroke="#222" stroke-width="0.9" stroke-linejoin="miter"/>
<circle cx="97.2" cy="34.6" r="3.6" fill="#dff3fb" stroke="#6da7cf" stroke-width="1.3"/><path d="M100.1,37.6L104.2,41.6" stroke="#e09a3a" stroke-width="2" stroke-linecap="round"/><path d="M95.2,34.6H99.2" stroke="#2a5fb0" stroke-width="1.3"/><path d="M97.2,32.6V36.6" stroke="#2a5fb0" stroke-width="1.3"/>
<circle cx="114.6" cy="34.6" r="3.6" fill="#dff3fb" stroke="#6da7cf" stroke-width="1.3"/><path d="M117.5,37.6L121.6,41.6" stroke="#e09a3a" stroke-width="2" stroke-linecap="round"/><path d="M112.6,34.6H116.6" stroke="#2a5fb0" stroke-width="1.3"/>
<path d="M130.2,37.2L128.2,35.6L129,34.6L130.8,35.6V32.6L131.8,32.2L132.6,34.4V31.6L133.8,31.4L134.4,34.2L134.8,31.8L136,31.8L136.4,34.6L137.2,32.8L138.3,33.2L138.2,37.6C138.2,40 137,41.6 136.6,42.4H132.4C131.8,40.6 131,38.6 130.2,37.2Z" fill="#fbe3cf" stroke="#5576a8" stroke-width="0.8" stroke-linejoin="round"/>
<path d="M147.3,34.2A5,5 0 1 1 148.2,40.2" fill="none" stroke="#2c3c78" stroke-width="1.5"/><path d="M145.3,33.6L149.6,33.2L147.8,36.6Z" fill="#2c3c78"/><circle cx="151.6" cy="37" r="2" fill="#e6ebf7" stroke="#3f4f8c" stroke-width="0.8"/>
<rect x="166.2" y="30.7" width="7.6" height="7.2" fill="#e9e3a2" stroke="#8f8a50" stroke-width="0.8"/><path d="M167.8,33.2H172.2M167.8,35H172.2" stroke="#a9a36a" stroke-width="0.6"/><path d="M162.2,33C163,36.5 165.5,40 172.6,42.2" fill="none" stroke="#2030e0" stroke-width="0.8" stroke-dasharray="2 1.2"/><path d="M163.2,38.6H169M166.1,35.8V41.6" stroke="#111" stroke-width="1.3"/>
<path d="M190.6,31.4L186,37" stroke="#5b7fb8" stroke-width="1.8" stroke-linecap="round"/><path d="M185.8,36.2L187.2,37.6L183.4,41.8L180.6,42Z" fill="#333" stroke="#222" stroke-width="0.5"/><rect x="187.6" y="38.6" width="3.6" height="3.6" fill="#f0102a"/>
<path d="M197,36H201L199,38.2Z" fill="#222"/>
<rect x="214.5" y="31.5" width="7" height="6" fill="#e8eefa" stroke="#45609a" stroke-width="0.9"/><rect x="212.3" y="33.5" width="7.4" height="6" fill="#f4f7fd" stroke="#45609a" stroke-width="0.9"/><path d="M214,40.6h3.2M218.8,40.6h3.2" stroke="#3a5592" stroke-width="2.2" stroke-linecap="round"/><path d="M216.4,40.6h3" stroke="#8aa0cc" stroke-width="1"/>
<rect x="233.5" y="29.5" width="16" height="15" rx="2" fill="#e4e4e4" stroke="#7b7b7b" stroke-width="1"/><linearGradient id="cbi" x1="0" y1="0" x2="0" y2="1"><stop offset="0" stop-color="#9a8cf0"/><stop offset="0.45" stop-color="#8fd8e8"/><stop offset="0.8" stop-color="#f2e89a"/><stop offset="1" stop-color="#f0b890"/></linearGradient><rect x="237.6" y="31" width="7.4" height="11" fill="url(#cbi)" stroke="#2c3c78" stroke-width="1"/>
<rect x="252.6" y="31.2" width="11" height="10.4" fill="#f4f6fb" stroke="#47609a" stroke-width="0.9"/><rect x="254.2" y="33" width="3" height="2.4" fill="#e44"/><rect x="254.2" y="37.2" width="3" height="2.4" fill="#55e"/><path d="M258.6,34.2H262M258.6,38.4H262" stroke="#444" stroke-width="1.2"/>
<rect x="278" y="33.4" width="7.4" height="7" rx="0.8" fill="#9c9c9c" stroke="#b4b4b4" stroke-width="0.6"/>
<rect x="293.6" y="31.9" width="10" height="9.4" fill="#fff" stroke="#2c3c88" stroke-width="1.2"/><path d="M293.6,33.2H303.6" stroke="#2c3c88" stroke-width="1.6"/><path d="M293.6,40.2H303.6" stroke="#8c98c8" stroke-width="1.4"/>
<rect x="817.5" y="29.5" width="15.4" height="15" rx="2" fill="#e4e4e4" stroke="#7b7b7b" stroke-width="1"/>
<rect x="820.6" y="32.4" width="9" height="9" fill="#fff" stroke="#222" stroke-width="1.1"/><path d="M825.1,32.4V41.4M820.6,36.9H829.6" stroke="#222" stroke-width="1"/>
<rect x="837.5" y="32.4" width="9" height="9" fill="#fff" stroke="#222" stroke-width="1.1"/><path d="M842,32.4V41.4" stroke="#222" stroke-width="1"/>
<rect x="854.4" y="32.4" width="9.2" height="9" fill="#fff" stroke="#222" stroke-width="1.1"/><path d="M854.4,36.9H863.6" stroke="#555" stroke-width="1.2"/>
<rect x="874" y="32.4" width="6.6" height="5" fill="#fff" stroke="#222" stroke-width="1"/><path d="M874,33H880.6" stroke="#222" stroke-width="1.4"/><rect x="871.6" y="35.4" width="6.6" height="5" fill="#fff" stroke="#222" stroke-width="1"/><path d="M871.6,36H878.2" stroke="#222" stroke-width="1.4"/>
<rect x="888.8" y="32.2" width="9.4" height="9.4" fill="#fff" stroke="#222" stroke-width="1.1"/><path d="M888.8,33H898.2" stroke="#222" stroke-width="1.6"/>
<path d="M892.6,14.6L896.2,18.2M896.6,15.4V18.6H893.4" stroke="#222" stroke-width="1.2" fill="none"/>
</svg>
</div></body></html>
